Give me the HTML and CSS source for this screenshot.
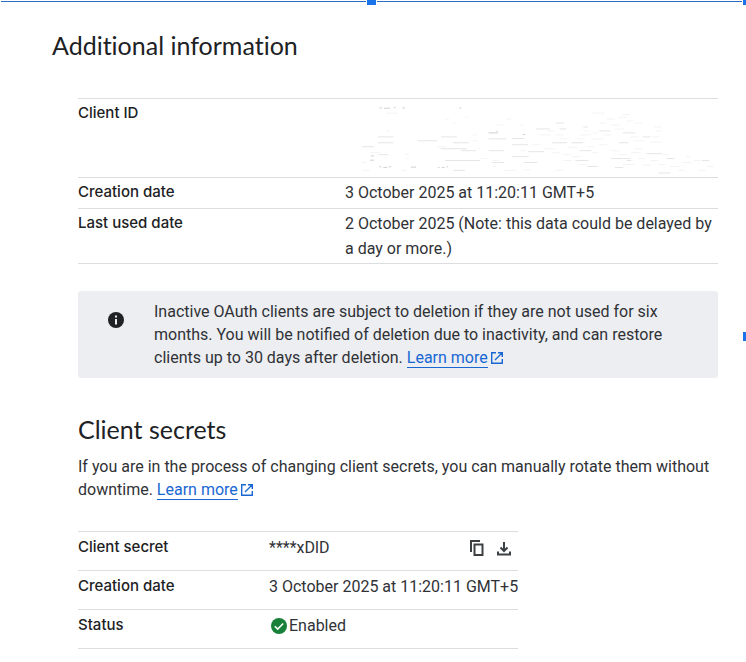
FILE: index.html
```html
<!DOCTYPE html>
<html lang="en">
    <head>
        <meta charset="UTF-8" />
        <meta name="viewport" content="width=device-width, initial-scale=1.0" />
        <title>Additional information</title>
        <link rel="stylesheet" href="styles.css">
    </head>
    <body>
        <!-- selection frame -->
        <div class="frame-line"></div>
        <div class="handle handle-top"></div>
        <div class="handle handle-corner"></div>
        <div class="handle handle-side"></div>

        <main class="panel">
            <h1>Additional information</h1>

            <div class="content">
                <table class="details info-table">
                    <tr class="row-id">
                        <th scope="row">Client ID</th>
                        <td>
                            <svg class="erased" viewBox="15 27 1119 231" aria-hidden="true">
                                <path class="dark" d="M112 51h8M126 52h18M156 50h5M182 51h8M355 51h6M86 197h10M84 210h12M112 230h6M124 232h12M140 230h8M208 231h16M290 232h5M302 232h8M316 230h5M444 127h28M468 122h4M548 132h7" />
                                <path class="mid" d="M108 139h47M108 157h46M228 151h60M300 139h48M336 157h48M298 175h80M360 181h46M312 211h106M444 145h54M516 144h36M444 181h48M516 163h48M516 199h50M564 184h50M456 217h36M552 217h40M588 115h42M648 97h26M660 115h20M636 157h46M696 157h36M732 109h14M720 181h36M708 211h40M744 229h32M780 121h34M852 127h38M840 157h28M816 205h60M864 211h14M828 232h26M912 139h24M924 190h48M960 249h36M1092 211h24M336 241h36M60 169h36M110 193h28M984 205h24" />
                                <path class="faint" d="M132 67h36M312 85h12M372 79h12M336 97h12M132 121h12M396 133h12M396 151h14M468 103h24M540 103h12M498 85h14M756 67h40M852 71h22M804 85h24M864 91h22M840 79h24M888 97h24M816 103h28M780 97h20M732 121h16M828 115h30M720 133h34M756 127h20M600 133h34M648 133h24M624 121h20M660 145h24M708 145h28M756 145h36M792 133h24M876 139h24M888 151h30M948 109h22M950 121h20M940 139h24M936 155h34M780 163h24M744 169h24M684 171h30M612 175h36M636 187h24M576 163h24M540 181h20M672 193h24M696 199h28M756 187h22M816 181h24M840 193h24M876 187h30M888 175h24M900 205h20M936 211h24M852 223h36M912 225h28M960 223h20M996 229h28M1032 217h30M1044 199h14M1068 211h20M1108 229h20M1080 241h24M1020 241h20M972 193h20M720 223h24M672 211h24M648 241h22M552 239h20M492 241h36M456 229h10M420 205h24M456 211h20M408 175h12M192 193h10M194 205h8M60 217h14M60 241h24M180 241h16M84 187h32M288 169h28" />
                            </svg>
                        </td>
                    </tr>
                    <tr>
                        <th scope="row">Creation date</th>
                        <td>3 October 2025 at 11:20:11 GMT+5</td>
                    </tr>
                    <tr>
                        <th scope="row">Last used date</th>
                        <td>2 October 2025 (Note: this data could be delayed by a day or more.)</td>
                    </tr>
                </table>

                <div class="notice">
                    <svg class="icon-info" viewBox="0 0 16 16" aria-hidden="true">
                        <circle cx="8" cy="8" r="8" fill="#202124" />
                        <path d="M7 3.5h2v2H7zM7 7h2v5.5H7z" fill="#eceef2" />
                    </svg>
                    <p>
                        Inactive OAuth clients are subject to deletion if they are not used for six
                        months. You will be notified of deletion due to inactivity, and can restore
                        clients up to 30 days after deletion.
                        <a href="#" class="link">Learn more</a><svg class="icon-open" viewBox="0 0 12 12" aria-hidden="true">
                            <path d="M5 .7H.7v10.6h10.6V7M7 .7h4.3V5M11 1L4 8" />
                        </svg>
                    </p>
                </div>

                <h2>Client secrets</h2>
                <p class="intro">
                    If you are in the process of changing client secrets, you can manually rotate them without
                    downtime.
                    <a href="#" class="link">Learn more</a><svg class="icon-open" viewBox="0 0 12 12" aria-hidden="true">
                        <path d="M5 .7H.7v10.6h10.6V7M7 .7h4.3V5M11 1L4 8" />
                    </svg>
                </p>

                <table class="details secret-table">
                    <tr>
                        <th scope="row">Client secret</th>
                        <td>
                            <div class="secret">
                                <span>****xDlD</span>
                                <div class="actions">
                                    <button type="button" aria-label="Copy">
                                        <svg viewBox="0 0 16 16" aria-hidden="true">
                                            <path d="M2 12V1h9" />
                                            <path d="M5.5 4.500h8V15h-8z" />
                                        </svg>
                                    </button>
                                    <button type="button" aria-label="Download">
                                        <svg viewBox="0 0 16 16" aria-hidden="true">
                                            <path d="M8 2v9M4.5 7.500L8 11l3.500-3.500M2 11.500v3h12v-3" />
                                        </svg>
                                    </button>
                                </div>
                            </div>
                        </td>
                    </tr>
                    <tr>
                        <th scope="row">Creation date</th>
                        <td>3 October 2025 at 11:20:11 GMT+5</td>
                    </tr>
                    <tr>
                        <th scope="row">Status</th>
                        <td>
                            <div class="status">
                                <svg viewBox="0 0 16 16" aria-hidden="true">
                                    <circle cx="8" cy="8" r="8" fill="#188038" />
                                    <path d="M3.800 8.200l2.900 2.900 5.500-5.600" fill="none" stroke="#fff" stroke-width="1.600" />
                                </svg>
                                <span>Enabled</span>
                            </div>
                        </td>
                    </tr>
                </table>
            </div>
        </main>
    </body>
</html>
```

FILE: styles.css
```css
* {
    box-sizing: border-box;
}

body {
    margin: 0;
    background-color: #fff;
    color: #303236;
    font-family: Roboto, sans-serif;
    font-size: 16px;
    line-height: 23px;
}

.frame-line {
    position: absolute;
    top: 1px;
    left: 1px;
    right: 0;
    height: 1px;
    background-color: #2a6fc4;
}

.handle {
    position: absolute;
    background-color: #1a73e8;
}

.handle-top {
    top: 0;
    left: 50%;
    width: 9px;
    height: 5px;
    margin-left: -6px;
    outline: 1px solid #fff;
}

.handle-corner {
    top: 0;
    right: 0;
    width: 3px;
    height: 5px;
    outline: 1px solid #fff;
}

.handle-side {
    top: 332px;
    right: 0;
    width: 3px;
    height: 9px;
}

.panel {
    padding: 29px 28px 12px 52px;
}

h1,
h2 {
    margin: 0;
    color: #202124;
    font-family: Lato, sans-serif;
    font-size: 25px;
    font-variant-ligatures: none;
    font-weight: 400;
    line-height: 32px;
}

.content {
    padding: 37px 0 0 26px;
}

.details {
    border-collapse: collapse;
}

.details tr {
    border-top: 1px solid #dcdde0;
    border-bottom: 1px solid #dcdde0;
}

.details th,
.details td {
    padding: 2px 0;
    text-align: left;
    vertical-align: top;
    line-height: 25px;
}

.details th {
    padding: 1px 0 3px;
    color: #202124;
    font-family: Inter, sans-serif;
    font-size: 15px;
    font-weight: 500;
}

.info-table {
    width: 100%;
}

.info-table th {
    width: 267px;
}

.info-table tr {
    height: 31px;
}

.info-table .row-id td {
    padding: 1px 0;
}

.erased {
    display: block;
    width: 100%;
    height: 76px;
}

.erased path {
    fill: none;
    stroke-width: 3;
}

.erased .dark {
    stroke: #cfcfcf;
}

.erased .mid {
    stroke: #e6e6e6;
}

.erased .faint {
    stroke: #f4f4f4;
}

.notice {
    display: flex;
    gap: 30px;
    margin-top: 27px;
    padding: 9px 30px;
    border-radius: 3px;
    background-color: #eceef2;
}

.notice p,
.intro {
    margin: 0;
}

.icon-info {
    flex: none;
    width: 16px;
    height: 16px;
    margin-top: 12px;
}

.link {
    border-bottom: 1px solid #1967d2;
    color: #1967d2;
    text-decoration: none;
}

.icon-open {
    width: 12px;
    height: 12px;
    margin-left: 3px;
    vertical-align: -1px;
    fill: none;
    stroke: #1967d2;
    stroke-width: 1.4;
}

h2 {
    margin: 35px 0 10px;
}

.secret-table {
    margin-top: 30px;
}

.secret-table th {
    width: 191px;
}

.secret-table tr {
    height: 39px;
}

.secret-table td {
    padding: 3px 0;
}

.secret-table th {
    padding: 2px 0 3px;
}

.secret {
    display: flex;
    justify-content: space-between;
}

.actions {
    display: flex;
    gap: 11px;
    padding: 5px 6px 0 0;
}

.actions button {
    width: 16px;
    height: 16px;
    padding: 0;
    border: none;
    background: none;
    cursor: pointer;
}

.actions svg {
    display: block;
    width: 16px;
    height: 16px;
    fill: none;
    stroke: #3c4043;
    stroke-width: 2;
}

.status {
    display: flex;
    align-items: center;
    gap: 2px;
    padding-left: 2px;
}

.status svg {
    width: 16px;
    height: 16px;
}
```
